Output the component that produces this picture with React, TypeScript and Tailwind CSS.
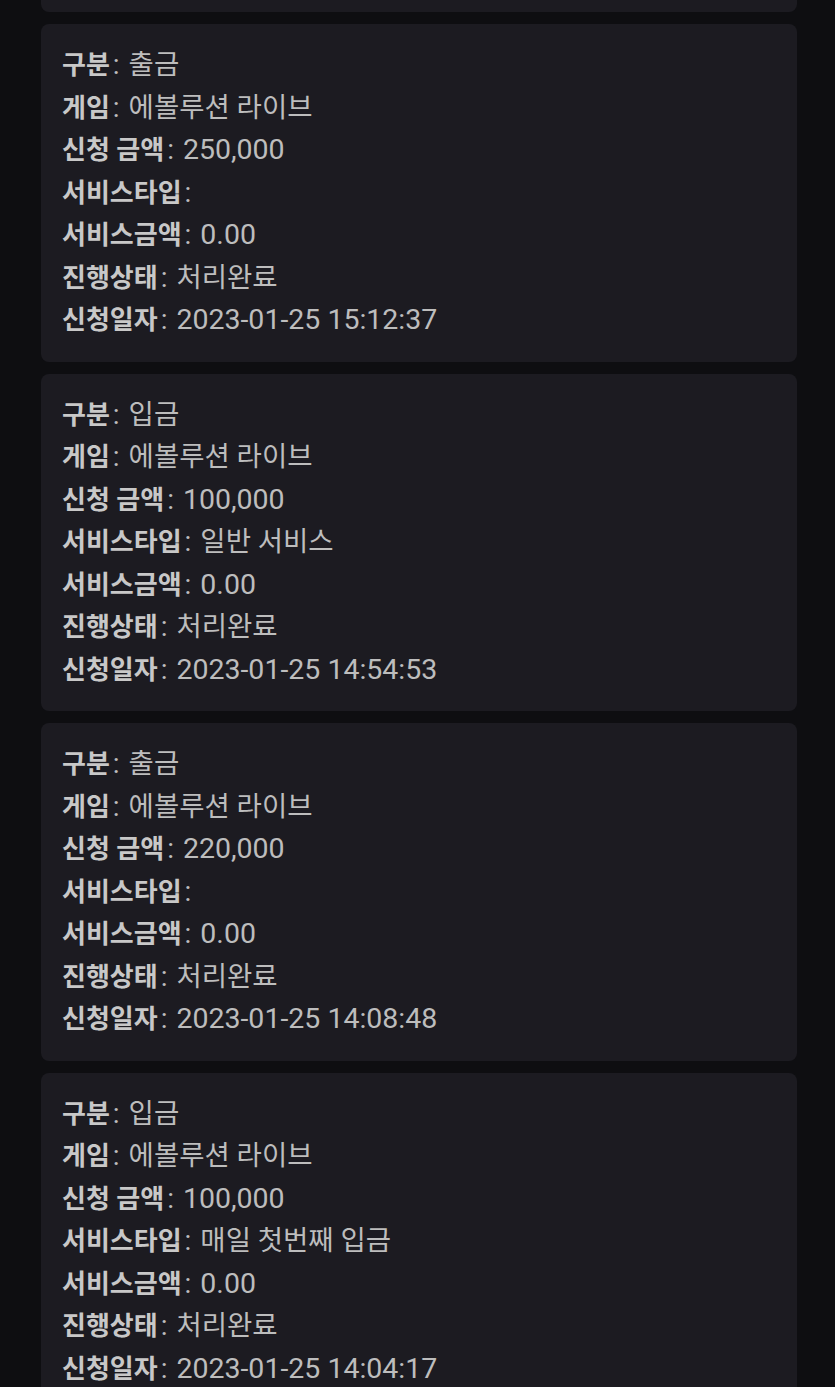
const rows = [
  {
    type: "출금",
    game: "에볼루션 라이브",
    amount: "250,000",
    serviceType: "",
    serviceAmount: "0.00",
    status: "처리완료",
    date: "2023-01-25 15:12:37",
  },
  {
    type: "입금",
    game: "에볼루션 라이브",
    amount: "100,000",
    serviceType: "일반 서비스",
    serviceAmount: "0.00",
    status: "처리완료",
    date: "2023-01-25 14:54:53",
  },
  {
    type: "출금",
    game: "에볼루션 라이브",
    amount: "220,000",
    serviceType: "",
    serviceAmount: "0.00",
    status: "처리완료",
    date: "2023-01-25 14:08:48",
  },
  {
    type: "입금",
    game: "에볼루션 라이브",
    amount: "100,000",
    serviceType: "매일 첫번째 입금",
    serviceAmount: "0.00",
    status: "처리완료",
    date: "2023-01-25 14:04:17",
  },
];

type Row = (typeof rows)[number];

// hangul values render a bit smaller than the digits on the phone font
const isHangul = (s: string) => /[가-힣]/.test(s);

const Line = ({ label, value }: { label: string; value: string }) => (
  <div className="whitespace-nowrap">
    <span className="font-bold text-[#c8c8c8]">{label}</span>
    <span className="ml-[3px] mr-[2px] text-[28px]">: </span>
    <span className={isHangul(value) ? "text-[27.5px]" : "text-[28.5px]"}>{value}</span>
  </div>
);

const Card = ({ row }: { row: Row }) => (
  <div className="rounded-lg bg-[#1c1b21] px-[21px] py-5">
    <Line label="구분" value={row.type} />
    <Line label="게임" value={row.game} />
    <Line label="신청 금액" value={row.amount} />
    <Line label="서비스타입" value={row.serviceType} />
    <Line label="서비스금액" value={row.serviceAmount} />
    <Line label="진행상태" value={row.status} />
    <Line label="신청일자" value={row.date} />
  </div>
);

export default function App() {
  return (
    <div
      className="h-[1387px] overflow-hidden bg-[#0e0e11] text-[26px] leading-[42.5px] text-[#bdbdbd]"
      style={{ fontFamily: 'Roboto, "Noto Sans CJK KR", sans-serif' }}
    >
      <div className="ml-[41px] flex w-[756px] flex-col gap-3">
        <div className="h-3 rounded-b-lg bg-[#1c1b21]" />
        {rows.map((row, i) => (
          <Card key={i} row={row} />
        ))}
      </div>
    </div>
  );
}
